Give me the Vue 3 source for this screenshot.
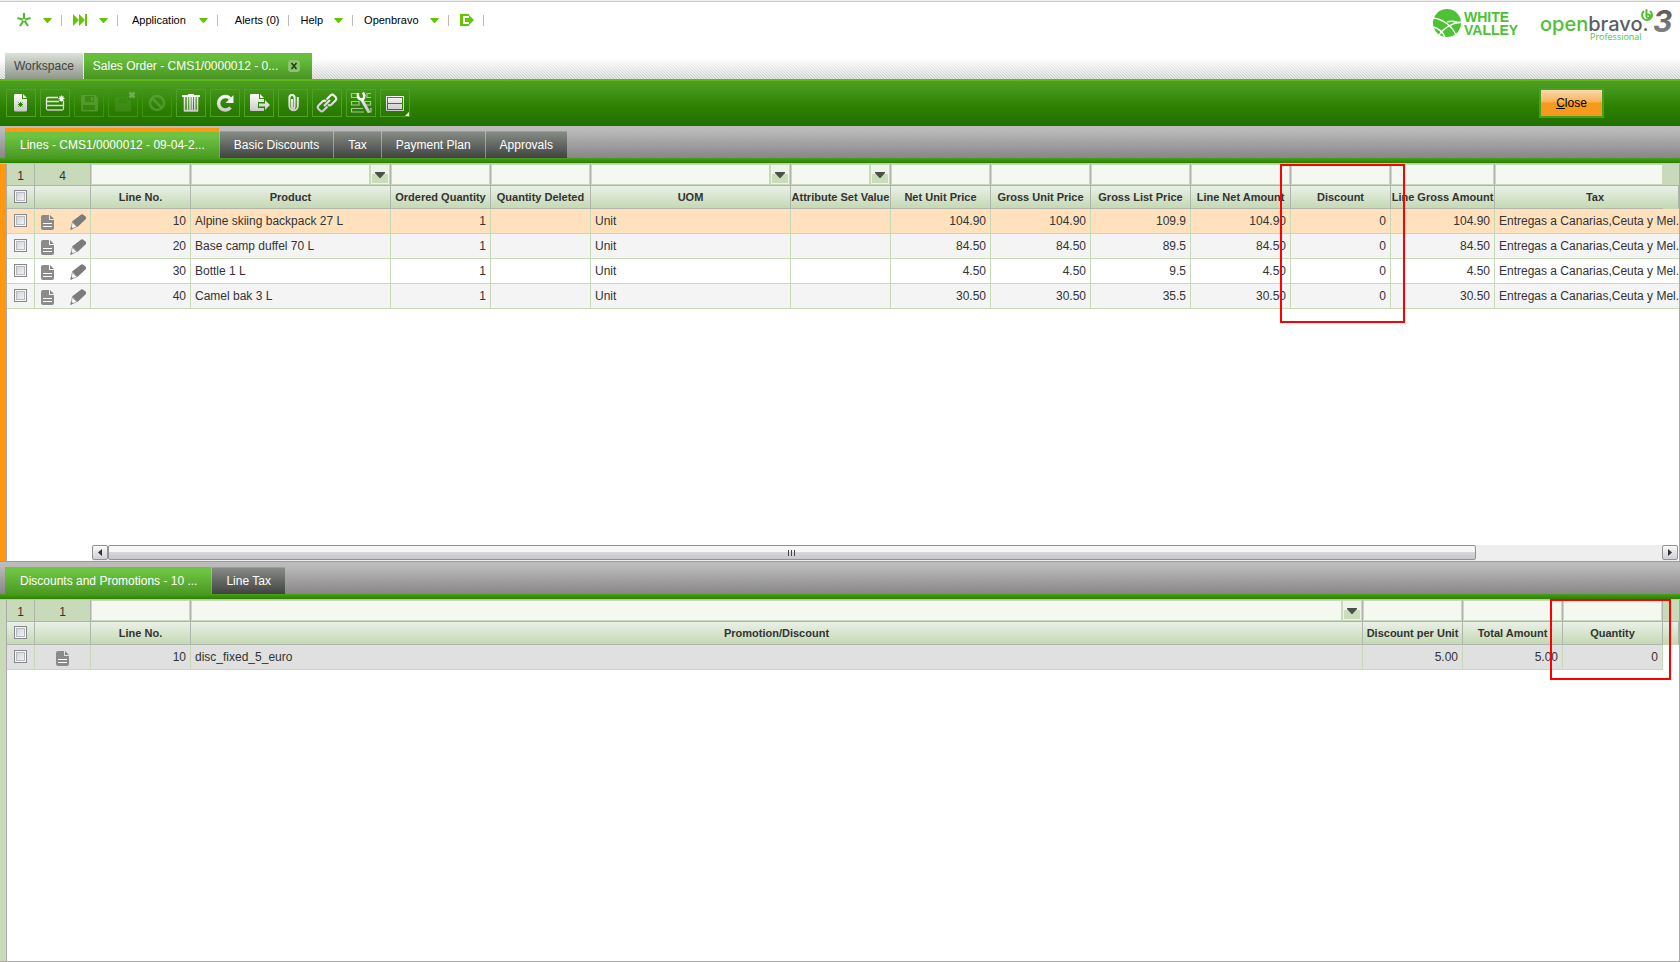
<script setup>
import { ref } from 'vue'

const menus = [
  { id: 'create', label: 'Create new', icon: 'star', caret: true },
  { id: 'quick', label: 'Quick launch', icon: 'ff', caret: true },
  { id: 'app', text: 'Application', caret: true },
  { id: 'alerts', text: 'Alerts (0)' },
  { id: 'help', text: 'Help', caret: true },
  { id: 'user', text: 'Openbravo', caret: true },
  { id: 'exit', label: 'Log out', icon: 'exit' },
]

const tools = [
  { id: 'new', label: 'New in form' },
  { id: 'row', label: 'New in grid' },
  { id: 'save', label: 'Save', off: true },
  { id: 'saveclose', label: 'Save and close', off: true },
  { id: 'undo', label: 'Undo', off: true },
  { id: 'trash', label: 'Delete' },
  { id: 'refresh', label: 'Refresh' },
  { id: 'export', label: 'Export' },
  { id: 'clip', label: 'Attachments' },
  { id: 'link', label: 'Linked items' },
  { id: 'tool', label: 'Audit trail' },
  { id: 'view', label: 'Grid configuration' },
]

const lineTabs = ['Lines - CMS1/0000012 - 09-04-2...', 'Basic Discounts', 'Tax', 'Payment Plan', 'Approvals']
const discountTabs = ['Discounts and Promotions - 10 ...', 'Line Tax']

const lineCols = [
  { t: 'Line No.', w: 'w100', num: true },
  { t: 'Product', w: 'w200', drop: true },
  { t: 'Ordered Quantity', w: 'w100', num: true },
  { t: 'Quantity Deleted', w: 'w100', num: true },
  { t: 'UOM', w: 'w200', drop: true },
  { t: 'Attribute Set Value', w: 'w100', drop: true },
  { t: 'Net Unit Price', w: 'w100', num: true },
  { t: 'Gross Unit Price', w: 'w100', num: true },
  { t: 'Gross List Price', w: 'w100', num: true },
  { t: 'Line Net Amount', w: 'w100', num: true },
  { t: 'Discount', w: 'w100', num: true },
  { t: 'Line Gross Amount', w: 'w104', num: true },
  { t: 'Tax', w: 'wauto', last: true },
]
const tax = 'Entregas a Canarias,Ceuta y Mel.'
const lines = [
  ['10', 'Alpine skiing backpack 27 L', '1', '', 'Unit', '', '104.90', '104.90', '109.9', '104.90', '0', '104.90', tax],
  ['20', 'Base camp duffel 70 L', '1', '', 'Unit', '', '84.50', '84.50', '89.5', '84.50', '0', '84.50', tax],
  ['30', 'Bottle 1 L', '1', '', 'Unit', '', '4.50', '4.50', '9.5', '4.50', '0', '4.50', tax],
  ['40', 'Camel bak 3 L', '1', '', 'Unit', '', '30.50', '30.50', '35.5', '30.50', '0', '30.50', tax],
]

const discountCols = [
  { t: 'Line No.', w: 'w100', num: true },
  { t: 'Promotion/Discount', w: 'wauto', drop: true },
  { t: 'Discount per Unit', w: 'w100', num: true },
  { t: 'Total Amount', w: 'w100', num: true },
  { t: 'Quantity', w: 'w100', num: true },
]
const discounts = [['10', 'disc_fixed_5_euro', '5.00', '5.00', '0']]

const lineTab = ref(0)
const discountTab = ref(0)
</script>

<template>
  <div class="page">
    <svg class="defs" aria-hidden="true">
      <defs>
        <linearGradient id="silver" x1="0" y1="0" x2="0" y2="24" gradientUnits="userSpaceOnUse">
          <stop offset="0.1" stop-color="#fff" />
          <stop offset="1" stop-color="#bdbdbd" />
        </linearGradient>
        <linearGradient id="three" x1="0" y1="0" x2="0" y2="1">
          <stop offset="0" stop-color="#4d4d4f" />
          <stop offset="1" stop-color="#8e8e90" />
        </linearGradient>
        <symbol id="doc" viewBox="0 0 13 15">
          <path fill="#858585" fill-opacity="0.95" d="M2 0h6v5h5v8a2 2 0 0 1-2 2H2a2 2 0 0 1-2-2V2a2 2 0 0 1 2-2z" />
          <path fill="#858585" d="M9 0l4 4H9z" />
          <path stroke="#fff" d="M2 8.500h9M2 11.500h9" />
        </symbol>
        <symbol id="pencil" viewBox="0 0 16 16">
          <path fill="#7c7c7c" d="M10.500 1a2 2 0 0 1 2.500-.5l2.500 2a2 2 0 0 1 .2 2.800L7.500 13 2 7.500z" />
          <path fill="#fff" stroke="#858585" stroke-width=".7" d="M2.300 8.500l4.500 4.200L.8 15.300z" />
          <path fill="#7c7c7c" d="M.3 16l1-3.500 2 2z" />
        </symbol>
        <symbol id="caret" viewBox="0 0 10 6">
          <path fill="currentColor" d="M0 0h10v1L5.500 6h-1L0 1z" />
        </symbol>
      </defs>
    </svg>

    <header class="top">
      <nav class="menu">
        <template v-for="m in menus" :key="m.id">
          <button type="button" class="item" :class="[m.id]" :aria-label="m.label">
            <svg v-if="m.icon === 'star'" class="i14" viewBox="0 0 14 14">
              <path stroke="#53b82c" stroke-width="2.200" d="M7 7V0M7 7L.5 5M7 7l6.500-2M7 7l-4 6M7 7l4 6" />
              <circle cx="7" cy="7" r="1" fill="#fff" />
            </svg>
            <svg v-else-if="m.icon === 'ff'" class="i14" viewBox="0 0 14 14">
              <path fill="#66c400" d="M0 1l6 6V1l6 6V1h2v12h-2V7l-6 6V7l-6 6z" />
            </svg>
            <svg v-else-if="m.icon === 'exit'" class="i14" viewBox="0 0 14 14">
              <path fill="#66c400" d="M0 1h9v2H3v8h6v2H0z" />
              <path fill="#66c400" d="M5 5h4V2l5 5-5 5V9H5z" />
            </svg>
            <span v-if="m.text">{{ m.text }}</span>
            <svg v-if="m.caret" class="caret"><use href="#caret" /></svg>
          </button>
          <i class="sep"></i>
        </template>
      </nav>
      <div class="logos">
        <svg class="valley" viewBox="0 0 86 32" role="img" aria-label="White Valley">
          <circle cx="14" cy="16" r="14" fill="#4cc234" />
          <path fill="none" stroke="#fff" stroke-width="1.300" d="M0 11c10 1 19 8 23 17M28 15c-10 1-18 7-22 13M14 15c3-1 8-1 13 1M0 20c5 1 9 4 12 10" />
          <text x="31" y="15" class="brand">WHITE</text>
          <text x="31" y="28" class="brand">VALLEY</text>
        </svg>
        <svg class="bravo" viewBox="0 0 132 36" role="img" aria-label="Openbravo 3 Professional">
          <text x="0" y="24" class="word"><tspan fill="#53bf2f">open</tspan><tspan fill="#5d5d60">bravo.</tspan></text>
          <text x="50" y="33" class="pro">Professional</text>
          <path fill="none" stroke="#53bf2f" stroke-width="2" stroke-linecap="round" d="M103.500 4.500a5 5 0 1 0 7 0M106.500 3v6.500a1.800 1.800 0 1 0 1.800-2" />
          <text x="113" y="25" class="three">3</text>
        </svg>
      </div>
    </header>

    <div class="windows">
      <button type="button" class="wtab">Workspace</button>
      <div class="wtab on">
        <span>Sales Order - CMS1/0000012 - 0...</span>
        <button type="button" class="x" aria-label="Close tab">
          <svg viewBox="0 0 12 12"><path stroke="#1c3d10" stroke-width="1.500" d="M3.500 3l5 6M8.500 3l-5 6" /></svg>
        </button>
      </div>
    </div>

    <div class="toolbar">
      <button v-for="t in tools" :key="t.id" type="button" class="tool" :class="{ off: t.off }" :disabled="t.off" :aria-label="t.label">
        <svg viewBox="0 0 24 24" fill="none">
          <template v-if="t.id === 'new'">
            <path fill="url(#silver)" d="M6 3h7v5h5v11a1.500 1.500 0 0 1-1.500 1.500h-10A1.500 1.500 0 0 1 5 19V4.500A1.500 1.500 0 0 1 6 3zM14 3l4 4h-4z" />
            <path stroke="#2f8a00" d="M11.500 11v5M9 13.500h5M9.500 11.500l4 4M13.500 11.500l-4 4" />
          </template>
          <template v-else-if="t.id === 'row'">
            <path stroke="url(#silver)" stroke-width="1.300" d="M15 6.500H5A1.500 1.500 0 0 0 3.500 8v9.500A1.500 1.500 0 0 0 5 19h14a1.500 1.500 0 0 0 1.500-1.500V10M4 10.500h12M4 14.500h16" />
            <path stroke="#fff" stroke-width="1.200" d="M18.500 4.500v6M15.500 7.500h6M16.500 5.500l4 4M20.500 5.500l-4 4" />
          </template>
          <template v-else-if="t.id === 'save'">
            <path fill="#74ab55" d="M5 4h13l3 3v12a1.500 1.500 0 0 1-1.500 1.500h-14A1.500 1.500 0 0 1 4 19V5z" />
            <path fill="#3d8c17" d="M8 5h9v6H8zM6 14h12v5H6z" />
            <path fill="#74ab55" d="M14 6h2v4h-2z" />
          </template>
          <template v-else-if="t.id === 'saveclose'">
            <path fill="#4f942b" d="M5 6h12v3h3v10a1.500 1.500 0 0 1-1.500 1.500h-13A1.500 1.500 0 0 1 4 19V7z" />
            <path fill="#3d8c17" d="M8 7h8v5H8z" />
            <path stroke="#a8cc92" stroke-width="2.500" d="M18.500 1.500l5 5M23.500 1.500l-5 5" />
          </template>
          <template v-else-if="t.id === 'undo'">
            <circle cx="12" cy="12" r="7" stroke="#74ab55" stroke-width="2.500" />
            <path stroke="#74ab55" stroke-width="2.500" d="M7 7l10 10" />
          </template>
          <template v-else-if="t.id === 'trash'">
            <path fill="url(#silver)" d="M3 4h6V3h6v1h6v2H3z" />
            <path stroke="url(#silver)" stroke-width="1.600" d="M5.500 6v13.500h13V6M8.500 6v13M11 6v13M13.300 6v13M15.800 6v13M5 20h14" />
          </template>
          <template v-else-if="t.id === 'refresh'">
            <path stroke="url(#silver)" stroke-width="3.500" d="M17.500 16.500a6.700 6.700 0 1 1-.5-9" />
            <path fill="#f4f4f4" d="M20.500 4v8h-8z" />
          </template>
          <template v-else-if="t.id === 'export'">
            <path fill="url(#silver)" d="M4 3h8v5h5v3h-6v6h6v3H4a1 1 0 0 1-1-1V4a1 1 0 0 1 1-1zM13 3l4 4h-4z" />
            <path fill="url(#silver)" d="M12 12.500h6V9l5 5-5 5v-3.500h-6z" />
          </template>
          <template v-else-if="t.id === 'clip'">
            <path stroke="url(#silver)" stroke-width="2" d="M11 8v8a1.300 1.300 0 0 0 2.600 0V6.500a2.600 2.600 0 0 0-5.200 0V15a4.200 4.200 0 0 0 8.400 0V6" />
          </template>
          <template v-else-if="t.id === 'link'">
            <path stroke="url(#silver)" stroke-width="2" d="M11.500 8.500l4-4a2.500 2.500 0 0 1 3.500 0l1.500 1.500a2.500 2.500 0 0 1 0 3.500l-4 4a2.500 2.500 0 0 1-3.500 0M12.500 15.500l-4 4a2.500 2.500 0 0 1-3.500 0L3.500 18a2.500 2.500 0 0 1 0-3.500l4-4a2.500 2.500 0 0 1 3.500 0M9 15l6-6" />
          </template>
          <template v-else-if="t.id === 'tool'">
            <path stroke="#a9c89a" stroke-width="1.200" d="M8 2.500H2.500v4H9M22 2.500h-4v4h4M2.500 10.500H10v3.500H2.500zM21.500 10.500H15V14h6.500zM14 17.500H2.500V21H15M21 17.500h1V21h-2" />
            <path stroke="url(#silver)" stroke-width="3" stroke-linecap="round" d="M13 9l6.500 11.500" />
            <path stroke="#fff" stroke-width="2.500" d="M9 2c-1 4 1 6.500 3.500 6.500S16.500 5 14 1.500" />
          </template>
          <template v-else>
            <path fill="url(#silver)" fill-rule="evenodd" d="M3 5h18v15H3zM4 6v13h16V6z" />
            <path fill="url(#silver)" d="M5 7h14v5H5zM5 13h14v5H5z" />
          </template>
        </svg>
        <i v-if="t.id === 'view'" class="more"></i>
      </button>
      <button type="button" class="close"><u>C</u>lose</button>
    </div>

    <div class="tabs first">
      <button v-for="(t, i) in lineTabs" :key="t" type="button" class="tab" :class="{ on: i === lineTab }" @click="lineTab = i">{{ t }}</button>
    </div>
    <section class="pane upper">
      <table>
        <colgroup>
          <col class="wcheck" /><col class="wact" />
          <col v-for="c in lineCols" :key="c.t" :class="c.w" />
          <col class="wcorner" />
        </colgroup>
        <thead>
          <tr class="filter">
            <td class="count">1</td>
            <td class="count">4</td>
            <td v-for="c in lineCols" :key="c.t" :class="{ open: c.last }">
              <div class="fbox">
                <input type="text" :aria-label="'Filter ' + c.t" />
                <button v-if="c.drop" type="button" :aria-label="'Choose ' + c.t"><svg class="caret"><use href="#caret" /></svg></button>
              </div>
            </td>
            <td class="open"></td>
          </tr>
          <tr class="head">
            <th><input type="checkbox" aria-label="Select all lines" /></th>
            <th></th>
            <th v-for="c in lineCols" :key="c.t" :class="{ taxhead: c.last }">{{ c.t }}</th>
            <th class="corner"></th>
          </tr>
        </thead>
        <tbody>
          <tr v-for="(r, i) in lines" :key="r[0]" :class="{ sel: i === 0, odd: i % 2 }">
            <td class="check"><input type="checkbox" :aria-label="'Select line ' + r[0]" /></td>
            <td>
              <div class="acts pair">
                <button type="button" aria-label="Open in form"><svg class="doc"><use href="#doc" /></svg></button>
                <i></i>
                <button type="button" aria-label="Edit in grid"><svg class="pencil"><use href="#pencil" /></svg></button>
              </div>
            </td>
            <td v-for="(v, j) in r" :key="j" :class="{ num: lineCols[j].num, open: lineCols[j].last }" :colspan="lineCols[j].last ? 2 : 1">{{ v }}</td>
          </tr>
        </tbody>
      </table>
      <div class="scroll">
        <button type="button" aria-label="Scroll left"><svg viewBox="0 0 4 7"><path fill="#333" d="M4 0v7L0 3.500z" /></svg></button>
        <div class="track"><div class="thumb"><i></i><i></i><i></i></div></div>
        <button type="button" aria-label="Scroll right"><svg viewBox="0 0 4 7"><path fill="#333" d="M0 0v7l4-3.500z" /></svg></button>
      </div>
      <div class="mark discount"></div>
    </section>

    <div class="tabs second">
      <button v-for="(t, i) in discountTabs" :key="t" type="button" class="tab" :class="{ on: i === discountTab }" @click="discountTab = i">{{ t }}</button>
    </div>
    <section class="pane lower">
      <table>
        <colgroup>
          <col class="wcheck" /><col class="wact" />
          <col v-for="c in discountCols" :key="c.t" :class="c.w" />
          <col class="wcorner" />
        </colgroup>
        <thead>
          <tr class="filter">
            <td class="count">1</td>
            <td class="count">1</td>
            <td v-for="c in discountCols" :key="c.t">
              <div class="fbox">
                <input type="text" :aria-label="'Filter ' + c.t" />
                <button v-if="c.drop" type="button" :aria-label="'Choose ' + c.t"><svg class="caret"><use href="#caret" /></svg></button>
              </div>
            </td>
            <td class="open"></td>
          </tr>
          <tr class="head">
            <th><input type="checkbox" aria-label="Select all discounts" /></th>
            <th></th>
            <th v-for="c in discountCols" :key="c.t">{{ c.t }}</th>
            <th class="corner"></th>
          </tr>
        </thead>
        <tbody>
          <tr v-for="r in discounts" :key="r[0]" class="grey">
            <td class="check"><input type="checkbox" :aria-label="'Select discount ' + r[0]" /></td>
            <td>
              <div class="acts">
                <button type="button" aria-label="Open in form"><svg class="doc"><use href="#doc" /></svg></button>
              </div>
            </td>
            <td v-for="(v, j) in r" :key="j" :class="{ num: discountCols[j].num }">{{ v }}</td>
          </tr>
        </tbody>
      </table>
      <div class="mark quantity"></div>
    </section>
  </div>
</template>

<style>
body {
  margin: 0;
  background: #fff;
}
</style>

<style scoped>
.page {
  --hatch: linear-gradient(45deg, transparent 34%, rgba(0, 0, 0, 0.16) 34% 66%, transparent 66%) 0 0 / 3px 3px;
  display: flex;
  flex-direction: column;
  min-height: 100vh;
  box-sizing: border-box;
  border-top: 1px solid #eee;
  border-bottom: 1px solid #aaa;
  font: 12px/16px "Liberation Sans", Arial, sans-serif;
  color: #333;
}
.page *,
.page *::before {
  box-sizing: border-box;
}
button {
  font: inherit;
  color: inherit;
  margin: 0;
  padding: 0;
  border: 0;
  background: none;
  white-space: nowrap;
}
svg {
  display: block;
  flex: none;
  overflow: visible;
}
.defs {
  position: absolute;
  width: 0;
  height: 0;
}

.top {
  display: flex;
  justify-content: space-between;
  height: 52px;
  border-top: 1px solid #ccc;
}
.menu {
  display: flex;
  align-items: center;
  height: 36px;
  padding-left: 6px;
  font-size: 11px;
  color: #000;
}
.item {
  display: flex;
  align-items: center;
  gap: 12px;
  padding: 0 9px 0 11px;
}
.item.app {
  padding-left: 14px;
  gap: 13px;
}
.item.alerts {
  padding: 0 9px 0 17px;
}
.item.help,
.item.user {
  gap: 11px;
}
.i14 {
  width: 14px;
  height: 14px;
}
.item .caret {
  width: 9px;
  height: 5px;
  color: #66c400;
}
.sep {
  width: 1px;
  height: 11px;
  background: #bbb;
}
.logos {
  display: flex;
  gap: 21px;
  padding: 5px 8px 0 0;
}
.valley {
  width: 86px;
  height: 32px;
}
.bravo {
  width: 132px;
  height: 36px;
}
.brand {
  font: bold 14px "Liberation Sans", Arial, sans-serif;
  fill: #4cc234;
}
.word {
  font: 500 20px Inter, sans-serif;
}
.pro {
  font: 9px "Open Sans", sans-serif;
  fill: #53bf2f;
}
.three {
  font: italic bold 30px Inter, sans-serif;
  fill: url(#three);
}

.windows {
  display: flex;
  align-items: flex-start;
  gap: 1px;
  height: 26px;
  padding-left: 5px;
  background: linear-gradient(#fff 20%, rgba(255, 255, 255, 0.1)), var(--hatch);
  background-color: #e2e2e2;
}
.wtab {
  height: 26px;
  padding: 0 9px;
  background: linear-gradient(#dce2da, #8f968a);
  color: #444;
  line-height: 25px;
}
.wtab.on {
  display: flex;
  align-items: center;
  gap: 10px;
  padding-right: 12px;
  background: linear-gradient(rgba(104, 190, 60, 1) 20%, rgba(72, 150, 34, 0.6)), var(--hatch);
  background-color: #4c9a26;
  color: #fff;
}
.x {
  width: 12px;
  height: 12px;
  border-radius: 3px;
  background: #8bc46f;
}

.toolbar {
  display: flex;
  align-items: center;
  gap: 4px;
  height: 47px;
  padding: 0 76px 1px 6px;
  border-top: 2px solid #5dba14;
  background: linear-gradient(#4da023, #2c8000 60%, #217000);
}
.tool {
  position: relative;
  display: grid;
  place-items: center;
  width: 30px;
  height: 28px;
  border: 1px solid #4fa026;
}
.tool svg {
  width: 24px;
  height: 24px;
}
.tool.off {
  border-color: #3d9312;
}
.tool.off svg {
  opacity: 0.5;
}
.more {
  position: absolute;
  right: 0;
  bottom: 0;
  border: 2px solid #fff;
  border-top-color: transparent;
  border-left-color: transparent;
}
.close {
  width: 65px;
  height: 30px;
  margin-left: auto;
  border: 2px solid #4a9e20;
  background: linear-gradient(#fbd9b0, #f8b45a 45%, #f59a1a 50%, #f59a1a);
  color: #000;
}

.tabs {
  display: flex;
  align-items: flex-end;
  gap: 1px;
  height: 38px;
  padding: 0 5px;
  border-bottom: 1px solid #c0c4bc;
  background:
    linear-gradient(#48a01c, #2c8000) bottom / 100% 5px no-repeat,
    linear-gradient(#bbb 10%, rgba(125, 122, 122, 0.6)),
    var(--hatch);
  background-color: #8a8888;
}
.tab {
  height: 27px;
  margin-bottom: 5px;
  padding: 0 14px;
  border-top: 1px solid #9a9e99;
  background: linear-gradient(#868b86, #40433f);
  color: #fff;
}
.tab.on {
  padding-left: 15px;
  border-top: 0;
  background: linear-gradient(rgba(110, 196, 66, 1) 15%, rgba(76, 158, 36, 0.6)), var(--hatch);
  background-color: #4c9a26;
}
.first .tab.on {
  height: 30px;
  border-top: 4px solid #ff970f;
}
.second {
  height: 39px;
  border-top: 1px solid #9c9c9c;
}

.pane {
  position: relative;
  display: flex;
  flex-direction: column;
  border-right: 1px solid #aaa;
}
.pane::before {
  content: "";
  position: absolute;
  inset: 0 auto 0 0;
  width: 7px;
  border-right: 1px solid #aaa;
  background: #c8dab9;
}
.upper::before {
  background: #ff970f;
}
.upper {
  flex: 397 1 0;
}
.lower {
  flex: 361 1 0;
}
table {
  width: calc(100% - 7px);
  margin-left: 7px;
  table-layout: fixed;
  border-collapse: separate;
  border-spacing: 0;
}
.wcheck { width: 28px; }
.wact { width: 56px; }
.w100 { width: 100px; }
.w104 { width: 104px; }
.w200 { width: 200px; }
.wcorner { width: 16px; }
td,
th {
  padding: 0 4px;
  overflow: hidden;
  white-space: nowrap;
  text-align: left;
}
.filter td {
  height: 22px;
  padding: 1px;
  border: solid #aeb4aa;
  border-width: 0 1px 1px 0;
  background: #c8dab9;
}
.filter td.count {
  padding-top: 3px;
  text-align: center;
}
.fbox {
  display: flex;
  gap: 2px;
  height: 19px;
}
.fbox input {
  flex: 1;
  min-width: 0;
  padding: 0 2px;
  border: 0;
  background: #f4f8f0;
}
.fbox button {
  display: grid;
  place-items: center;
  width: 18px;
  border: 1px solid #eef5e8;
  background: linear-gradient(#edf3e7 45%, #cbdcbc 50%);
}
.fbox .caret {
  width: 10px;
  height: 6px;
  color: #4c5148;
}
.filter td.open,
td.open {
  border-right: 0;
}
.head th {
  height: 23px;
  padding: 0;
  border: solid #b0b6ad;
  border-width: 0 1px 1px 0;
  background: linear-gradient(#eaf0e8, #c4d9b4);
  font-size: 11px;
  text-align: center;
}
.head th.taxhead {
  padding-left: 32px;
  border-right: 0;
}
.head th.corner {
  border-bottom-color: #c4d9b4;
}
tbody td {
  height: 25px;
  border: solid #c5dab5;
  border-width: 0 1px 1px 0;
}
tbody td.num {
  text-align: right;
}
.sel td { background: #ffe2bd; }
.odd td { background: #f4f4f4; }
.grey td { background: #e0e0e0; }
tbody td.check {
  padding: 0;
}
input[type="checkbox"] {
  appearance: none;
  display: block;
  width: 13px;
  height: 13px;
  margin: 0 auto 2px;
  border: 1px solid #85888c;
  background: linear-gradient(135deg, #c8ccd6, #fafafa);
  box-shadow: inset 0 0 0 1px #f6f6f6, inset 0 0 0 2px #b8babe;
}
.acts {
  display: flex;
  align-items: center;
  justify-content: center;
  gap: 8px;
  padding-top: 2px;
}
.acts.pair {
  padding-left: 2px;
}
.acts i {
  width: 1px;
  height: 11px;
  background: #c5dab5;
}
.doc {
  width: 13px;
  height: 15px;
}
.pencil {
  width: 16px;
  height: 16px;
}

.scroll {
  display: flex;
  height: 16px;
  margin: auto 1px 0 92px;
  background: #eee;
}
.scroll button {
  display: grid;
  place-items: center;
  width: 16px;
  height: 15px;
  border: 1px solid #909396;
  border-radius: 2px;
  background: linear-gradient(#fafafa, #d0d0d4);
}
.scroll svg {
  width: 4px;
  height: 7px;
}
.track {
  flex: 1;
}
.thumb {
  display: flex;
  align-items: center;
  justify-content: center;
  gap: 2px;
  width: 88%;
  height: 15px;
  border: 1px solid #909396;
  border-radius: 2px;
  background: linear-gradient(#f6f6f6 0 45%, #d6d6da 50%, #c8c8cc);
}
.thumb i {
  width: 1px;
  height: 6px;
  background: #444;
}
.mark {
  position: absolute;
  border: 2px solid #f00;
  pointer-events: none;
}
.discount {
  left: 1280px;
  top: 0;
  width: 125px;
  height: 159px;
}
.quantity {
  right: 8px;
  top: -1px;
  width: 121px;
  height: 81px;
}
</style>
